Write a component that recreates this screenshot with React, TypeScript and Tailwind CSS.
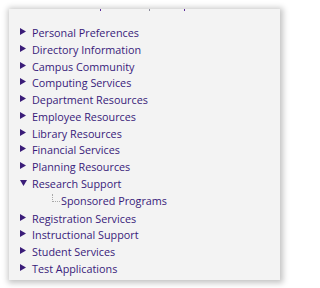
const items = [
  "Personal Preferences",
  "Directory Information",
  "Campus Community",
  "Computing Services",
  "Department Resources",
  "Employee Resources",
  "Library Resources",
  "Financial Services",
  "Planning Resources",
];

const after = [
  "Registration Services",
  "Instructional Support",
  "Student Services",
  "Test Applications",
];

function Arrow({ open }: { open?: boolean }) {
  return open ? (
    <svg width="7" height="6" viewBox="0 0 7 6" className="mt-[1px] shrink-0">
      <path d="M0 0h7L3.5 6z" fill="#3a1c78" />
    </svg>
  ) : (
    <svg width="6" height="7" viewBox="0 0 6 7" className="shrink-0">
      <path d="M0 0l6 3.5L0 7z" fill="#3a1c78" />
    </svg>
  );
}

function Row({ label, open }: { label: string; open?: boolean }) {
  return (
    <div className="flex h-[16.75px] items-start">
      <div className="flex w-[23px] justify-start pl-[11px] pt-[3px]">
        <Arrow open={open} />
      </div>
      <span className="leading-[16.75px]">{label}</span>
    </div>
  );
}

export default function App() {
  return (
    <div className="h-[288px] w-[288px] bg-white pl-[9px] pt-[9px] font-['Open_Sans',sans-serif] text-[10.8px] text-[#381a7a]">
      <div className="h-[271px] w-[271px] overflow-hidden bg-[#f3f3f3] shadow-[1px_1px_6px_2px_rgba(0,0,0,0.24)]">
        {/* clipped descenders of the heading above */}
        <div className="relative h-[2px]">
          <span className="absolute left-[91px] top-0 h-[2px] w-px bg-[#5a2a9a]" />
          <span className="absolute left-[140px] top-0 h-[2px] w-px bg-[#8a8a9a]" />
          <span className="absolute left-[175px] top-0 h-[2px] w-px bg-[#5a2a9a]" />
        </div>
        <div className="pt-[14px]">
          {items.map((t) => (
            <Row key={t} label={t} />
          ))}
          <Row label="Research Support" open />
          <div className="flex h-[16.75px] items-start">
            <div className="ml-[43px] mt-[1px] h-[8px] w-[8px] shrink-0 border-b border-l border-dotted border-[#a9a9a9]" />
            <span className="ml-[1px] leading-[16.75px]">Sponsored Programs</span>
          </div>
          <div className="pt-[1.3px]">
            {after.map((t) => (
              <Row key={t} label={t} />
            ))}
          </div>
        </div>
      </div>
    </div>
  );
}
